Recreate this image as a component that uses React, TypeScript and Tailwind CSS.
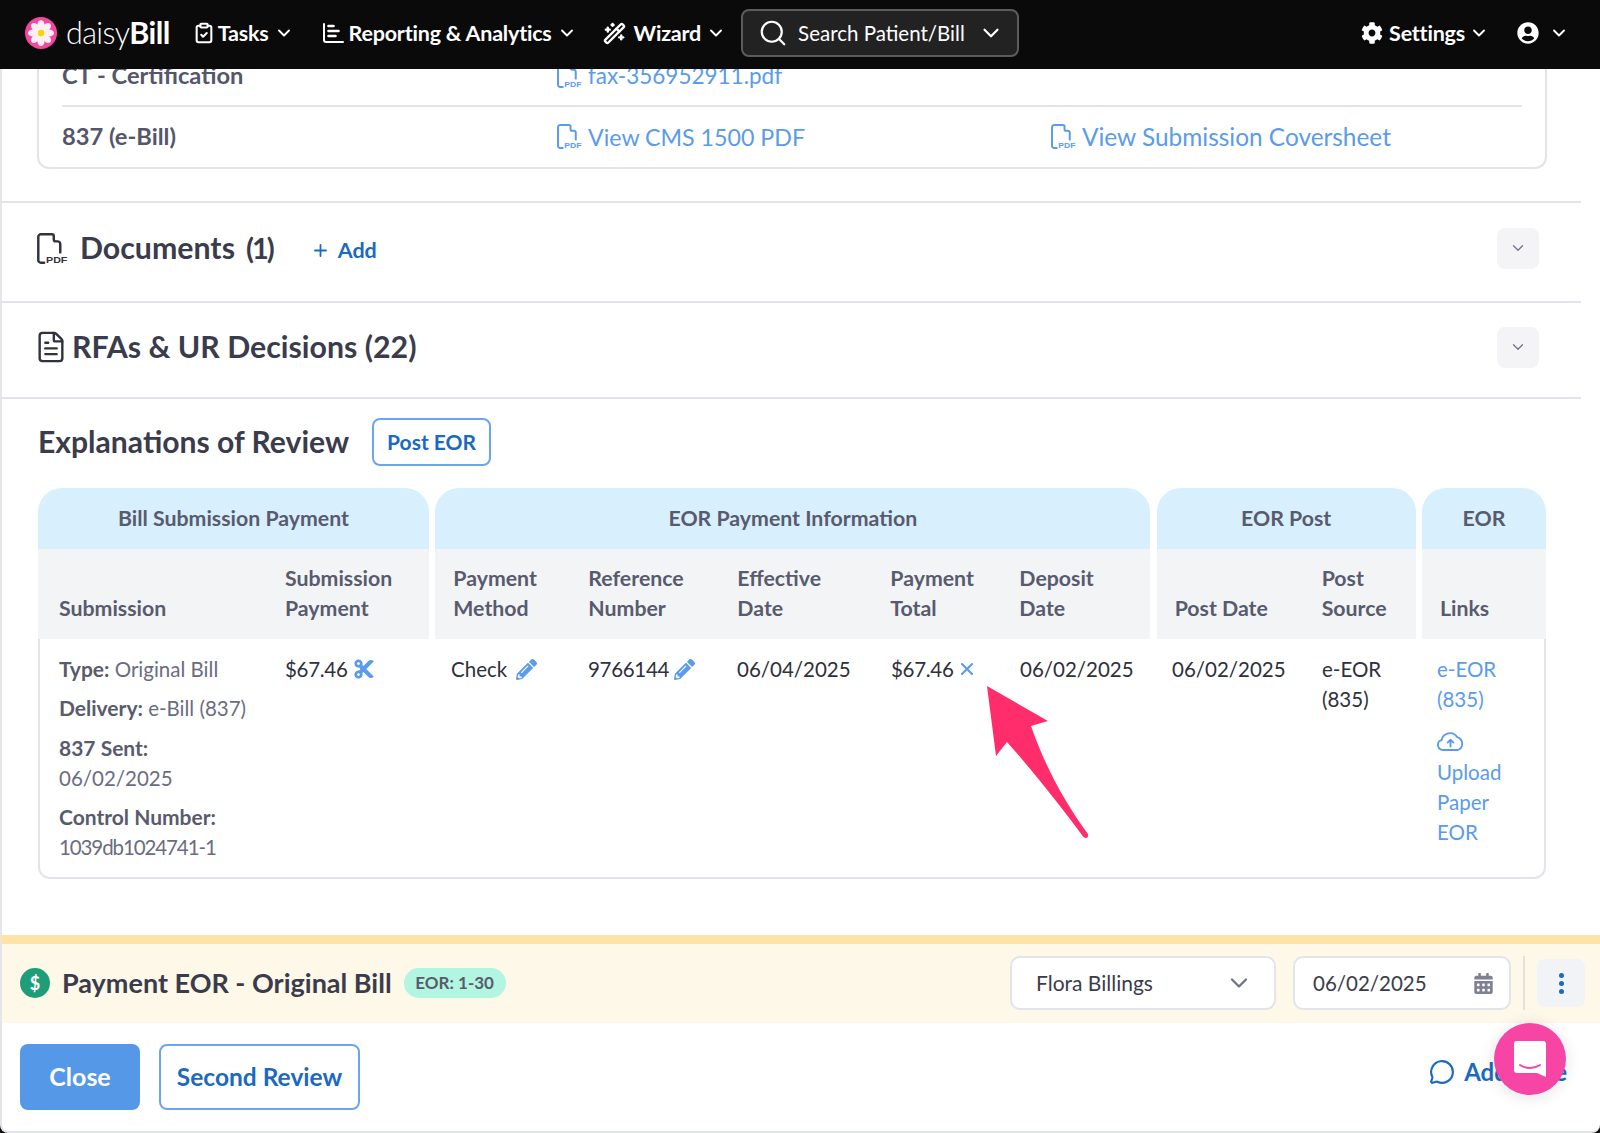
import React from "react";
import { ChevronDown, ClipboardCheck, Search, WandSparkles, FileText, Plus, MessageCircle, X } from "lucide-react";
import { FaCog, FaUserCircle, FaPencilAlt, FaCut, FaCalendarAlt } from "react-icons/fa";

const PdfIcon = ({ className }: { className?: string }) => (
  <svg viewBox="0 0 24 24" className={className} fill="none" stroke="currentColor" strokeWidth="1.9" strokeLinecap="round" strokeLinejoin="round">
    <path d="M5.5 23H3a2 2 0 0 1-2-2V3a2 2 0 0 1 2-2h8.5c1 0 1.5.5 1.5 1.5V5c0 1 .5 1.5 1.5 1.5H16c1 0 2 1 2 2V15" />
    <text x="7" y="23.4" fontSize="7.6" fontWeight="700" stroke="none" fill="currentColor" fontFamily="Liberation Sans, sans-serif" textLength="16.5" lengthAdjust="spacingAndGlyphs">PDF</text>
  </svg>
);

const CloudUp = ({ className }: { className?: string }) => (
  <svg viewBox="0 0 27 19" className={className} fill="none" stroke="currentColor" strokeWidth="1.9" strokeLinecap="round" strokeLinejoin="round">
    <path d="M6.5 18H6a5 5 0 0 1-1.4-9.8 8.5 8.5 0 0 1 15.6-3A6.8 6.8 0 0 1 21 18Z" />
    <path d="M13.5 14.5V8M10.6 10.6l2.9-2.9 2.9 2.9" />
  </svg>
);

const Logo = () => (
  <svg viewBox="0 0 32 32" className="h-8 w-8">
    <circle cx="16" cy="16" r="16" fill="#f5479f" />
    {[0, 45, 90, 135, 180, 225, 270, 315].map((a) => (
      <ellipse key={a} cx="16" cy="8.5" rx="3.6" ry="5.6" fill="#ffeef6" transform={`rotate(${a} 16 16)`} />
    ))}
    <circle cx="16" cy="16" r="3.2" fill="#fbd400" />
  </svg>
);

const ReportIcon = () => (
  <svg viewBox="0 0 22 22" className="h-[22px] w-[22px]" fill="none" stroke="white" strokeWidth="2" strokeLinecap="round">
    <path d="M2 2v16a2 2 0 0 0 2 2h17" />
    <path d="M6.5 4h5M6.5 9h10M6.5 14h7" strokeWidth="2.6" />
  </svg>
);

const NavItem = ({ icon, label, ml, gap }: { icon: React.ReactNode; label: string; ml: string; gap: string }) => (
  <div className={`flex items-center ${ml}`}>
    {icon}
    <span className={`text-[21.5px] font-bold tracking-[-0.2px] text-white ${gap}`}>{label}</span>
    <ChevronDown className="ml-[5px] h-[20px] w-[20px] text-white" strokeWidth={2.25} />
  </div>
);

const Pdf = ({ label, size }: { label: string; size: string }) => (
  <div className="flex items-center font-normal text-[#5a9bea]">
    <PdfIcon className="h-[25px] w-[25px]" />
    <span className={`ml-[6px] ${size}`}>{label}</span>
  </div>
);

const Collapse = () => (
  <div className="flex h-[41px] w-[42px] items-center justify-center rounded-lg bg-[#f4f4f7]">
    <ChevronDown className="h-[18px] w-[18px] text-[#70738a]" strokeWidth={1.75} />
  </div>
);

const Head = ({ w, children }: { w: string; children: React.ReactNode }) => (
  <div className={`flex flex-col justify-end ${w}`}>{children}</div>
);

const Blue = "text-[#5a9bea]";

export default function App() {
  return (
    <div className="relative flex h-[1133px] w-[1600px] flex-col overflow-hidden bg-[#111] font-['Lato','Liberation_Sans',sans-serif]">
      <header className="flex h-[69px] shrink-0 items-center bg-[#0a0a0a] pb-[3px]">
        <div className="ml-[25px]"><Logo /></div>
        <span className="ml-[9px] text-[30.5px] font-light tracking-[-0.6px] text-white">
          daisy<span className="font-bold">Bill</span>
        </span>
        <NavItem ml="ml-[23px]" gap="ml-[3px]" icon={<ClipboardCheck className="h-[22px] w-[22px] text-white" strokeWidth={2.25} />} label="Tasks" />
        <NavItem ml="ml-[28px]" gap="ml-[5px]" icon={<ReportIcon />} label="Reporting & Analytics" />
        <NavItem ml="ml-[26px]" gap="ml-[8px]" icon={<WandSparkles className="h-[23px] w-[23px] text-white" strokeWidth={2.5} />} label="Wizard" />
        <div className="ml-[15px] flex h-[48px] w-[278px] items-center rounded-lg border-2 border-[#5c5c5c] bg-[#222] pl-[15px]">
          <Search className="h-[30px] w-[30px] text-white" strokeWidth={1.75} />
          <span className="ml-[10px] text-[20.5px] text-white">Search Patient/Bill</span>
          <ChevronDown className="ml-[13px] h-[26px] w-[26px] text-white" strokeWidth={2} />
        </div>
        <div className="ml-auto flex items-center">
          <FaCog className="h-[22px] w-[22px] text-white" />
          <span className="ml-[6px] text-[21.5px] font-bold tracking-[-0.2px] text-white">Settings</span>
          <ChevronDown className="ml-[4px] h-[20px] w-[20px] text-white" strokeWidth={2.25} />
          <FaUserCircle className="ml-[28px] h-[22px] w-[22px] text-white" />
          <ChevronDown className="ml-[10px] mr-[31px] h-[20px] w-[20px] text-white" strokeWidth={2.25} />
        </div>
      </header>

      <main className="relative min-h-0 flex-1 overflow-hidden border-l-2 border-[#e6e6ea] bg-white">
        <div className="-mt-[23px] w-[1579px]">
          <div className="mb-[32px] ml-[35px] mr-[34px] rounded-b-xl border-x-2 border-b-2 border-[#e3e4e9] px-[23px]">
            <div className="grid h-[61px] grid-cols-[495px_494px_1fr] items-center border-b-2 border-[#e3e4e9] text-[23.7px] font-bold text-[#54566a]">
              <span>CT - Certification</span>
              <Pdf label="fax-356952911.pdf" size="text-[22.5px]" />
            </div>
            <div className="grid h-[60px] grid-cols-[495px_494px_1fr] items-center text-[23.7px] font-bold text-[#54566a]">
              <span>837 (e-Bill)</span>
              <Pdf label="View CMS 1500 PDF" size="text-[23.2px]" />
              <Pdf label="View Submission Coversheet" size="text-[24.4px]" />
            </div>
          </div>

          <section className="flex h-[100px] items-center border-t-2 border-[#e3e4e9] pb-[8px] pl-[35px] pr-[42px]">
            <PdfIcon className="h-[31px] w-[31px] text-[#303240]" />
            <h2 className="ml-[12px] text-[30.3px] font-bold text-[#3a3c4b]">Documents</h2>
            <span className="ml-[11px] text-[29px] font-bold tracking-[-2px] text-[#3a3c4b]">(1)</span>
            <div className="ml-[38px] mt-[4px] flex items-center text-[21.5px] font-bold text-[#1b6ac0]">
              <Plus className="h-[19px] w-[19px]" strokeWidth={2.25} />
              <span className="ml-[8px]">Add</span>
            </div>
            <div className="ml-auto"><Collapse /></div>
          </section>

          <section className="flex h-[96px] items-center border-t-2 border-[#e3e4e9] pb-[6px] pl-[35px] pr-[42px]">
            <FileText className="-ml-[3px] h-[34px] w-[34px] text-[#303240]" strokeWidth={1.7} />
            <h2 className="ml-[4px] text-[30.3px] font-bold text-[#3a3c4b]">RFAs &amp; UR Decisions (22)</h2>
            <div className="ml-auto"><Collapse /></div>
          </section>

          <section className="border-t-2 border-[#e3e4e9] pl-[36px] pr-[33px] pt-[19px]">
            <div className="flex items-center">
              <h2 className="text-[30.1px] font-bold text-[#3a3c4b]">Explanations of Review</h2>
              <button className="ml-[23px] h-[48px] w-[119px] rounded-lg border-2 border-[#6aa5ee] text-[21px] font-bold text-[#1b6ac0]">Post EOR</button>
            </div>

            <div className="mt-[22px] w-[1508px]">
              <div className="flex justify-between text-[21.3px] font-bold leading-[30px] text-[#585b6e]">
                <div className="w-[391px]">
                  <div className="flex h-[61px] items-center justify-center rounded-t-[24px] bg-[#d8effe] pb-[2px]">Bill Submission Payment</div>
                  <div className="flex h-[90px] bg-[#f3f4f6] pb-[16px] pl-[21px]">
                    <Head w="w-[226px]">Submission</Head>
                    <Head w="w-[140px]"><span>Submission</span><span>Payment</span></Head>
                  </div>
                </div>
                <div className="w-[715px]">
                  <div className="flex h-[61px] items-center justify-center rounded-t-[24px] bg-[#d8effe] pb-[2px]">EOR Payment Information</div>
                  <div className="flex h-[90px] bg-[#f3f4f6] pb-[16px] pl-[18px]">
                    <Head w="w-[135px]"><span>Payment</span><span>Method</span></Head>
                    <Head w="w-[149px]"><span>Reference</span><span>Number</span></Head>
                    <Head w="w-[153px]"><span>Effective</span><span>Date</span></Head>
                    <Head w="w-[129px]"><span>Payment</span><span>Total</span></Head>
                    <Head w="w-[110px]"><span>Deposit</span><span>Date</span></Head>
                  </div>
                </div>
                <div className="w-[259px]">
                  <div className="flex h-[61px] items-center justify-center rounded-t-[24px] bg-[#d8effe] pb-[2px]">EOR Post</div>
                  <div className="flex h-[90px] bg-[#f3f4f6] pb-[16px] pl-[18px]">
                    <Head w="w-[147px]">Post Date</Head>
                    <Head w="w-[90px]"><span>Post</span><span>Source</span></Head>
                  </div>
                </div>
                <div className="w-[124px]">
                  <div className="flex h-[61px] items-center justify-center rounded-t-[24px] bg-[#d8effe] pb-[2px]">EOR</div>
                  <div className="flex h-[90px] bg-[#f3f4f6] pb-[16px] pl-[18px]">
                    <Head w="w-[90px]">Links</Head>
                  </div>
                </div>
              </div>

              <div className="grid h-[240px] grid-cols-[245px_166px_137px_149px_154px_129px_152px_150px_115px_107px] rounded-b-xl border-x-2 border-b-2 border-[#e3e4e9] pt-[15px] text-[20.5px] leading-[30px] text-[#2e303c]">
                <div className="pl-[19px] text-[#6a6d80]">
                  <p><b className="text-[21px] font-bold text-[#585b6e]">Type:</b> Original Bill</p>
                  <p className="mt-[9px]"><b className="text-[21px] font-bold text-[#585b6e]">Delivery:</b> e-Bill (837)</p>
                  <p className="mt-[10px]"><b className="text-[21px] font-bold text-[#585b6e]">837 Sent:</b><br />06/02/2025</p>
                  <p className="mt-[9px]"><b className="text-[21px] font-bold text-[#585b6e]">Control Number:</b><br /><span className="tracking-[-1.1px]">1039db1024741-1</span></p>
                </div>
                <div className="flex h-[30px] items-center"><span className="tracking-[-0.3px]">$67.46</span><FaCut className={`ml-[5px] h-[22px] w-[22px] ${Blue}`} /></div>
                <div className="flex h-[30px] items-center">Check<FaPencilAlt className={`ml-[9px] h-[21px] w-[21px] ${Blue}`} /></div>
                <div className="flex h-[30px] items-center"><span className="tracking-[-0.3px]">9766144</span><FaPencilAlt className={`ml-[5px] h-[21px] w-[21px] ${Blue}`} /></div>
                <div>06/04/2025</div>
                <div className="flex h-[30px] items-center"><span className="tracking-[-0.3px]">$67.46</span><X className={`ml-[3px] h-[20px] w-[20px] ${Blue}`} strokeWidth={2.5} /></div>
                <div>06/02/2025</div>
                <div>06/02/2025</div>
                <div>e-EOR<br />(835)</div>
                <div className={Blue}>
                  <div>e-EOR<br />(835)</div>
                  <CloudUp className="mt-[18px] h-[19px] w-[27px]" />
                  <div className="mt-[6px]">Upload<br />Paper<br />EOR</div>
                </div>
              </div>
            </div>
          </section>
        </div>

        <svg className="absolute left-[979px] top-[611px] h-[160px] w-[112px]" viewBox="980 681 112 160" fill="#ff2d6b">
          <path d="M986 687L1047 722L1030 727C1045 770 1065 805 1087 835C1088 840 1083 840 1081 836C1058 805 1030 770 1006 743L995 757Z" />
        </svg>
      </main>

      <div className="flex h-[88px] shrink-0 items-center border-l-2 border-t-[9px] border-[#fde3a7] border-l-[#e6e6ea] bg-[#fef8e9] pb-[1px] pl-[18px]">
        <span className="flex h-[30px] w-[30px] items-center justify-center rounded-full bg-[#1e9e78] text-[18px] font-bold text-white">$</span>
        <span className="ml-[12px] text-[27px] font-bold text-[#3a3c4b]">Payment EOR - Original Bill</span>
        <span className="ml-[12px] flex h-[30px] w-[102px] items-center justify-center rounded-full bg-[#b2f5e0] text-[17px] font-bold text-[#585b6e]">EOR: 1-30</span>
        <div className="ml-auto flex h-[54px] w-[266px] items-center rounded-[10px] border-2 border-[#e3e4e9] bg-white pl-[24px] pr-[21px] text-[21px] text-[#3a3c4b]">
          Flora Billings
          <ChevronDown className="ml-auto h-[28px] w-[28px] text-[#70738a]" strokeWidth={2} />
        </div>
        <div className="ml-[17px] flex h-[54px] w-[218px] items-center rounded-[10px] border-2 border-[#e3e4e9] bg-white pl-[18px] pr-[16px] text-[20.5px] text-[#3a3c4b]">
          06/02/2025
          <FaCalendarAlt className="ml-auto h-[21px] w-[19px] text-[#7e8095]" />
        </div>
        <div className="ml-[12px] h-[54px] w-[2px] bg-[#e3e1d8]" />
        <div className="ml-[12px] mr-[15px] flex h-[48px] w-[48px] flex-col items-center justify-center gap-[3px] rounded-lg bg-[#f2f3f6]">
          <span className="h-[5px] w-[5px] rounded-full bg-[#1b6ac0]" />
          <span className="h-[5px] w-[5px] rounded-full bg-[#1b6ac0]" />
          <span className="h-[5px] w-[5px] rounded-full bg-[#1b6ac0]" />
        </div>
      </div>

      <footer className="flex h-[110px] shrink-0 items-center rounded-b-lg border-b-2 border-l-2 border-[#e3e4e9] bg-white pl-[18px]">
        <button className="h-[66px] w-[120px] rounded-lg bg-[#5698e8] text-[25px] font-bold text-white">Close</button>
        <button className="ml-[19px] h-[66px] w-[201px] rounded-lg border-2 border-[#6aa5ee] text-[24.5px] font-bold text-[#1b6ac0]">Second Review</button>
        <div className="mb-[10px] ml-auto mr-[33px] flex items-center text-[24px] font-bold text-[#1b6ac0]">
          <MessageCircle className="h-[26px] w-[26px]" strokeWidth={2} />
          <span className="ml-[9px]">Add Note</span>
        </div>
      </footer>

      <div className="absolute left-[1494px] top-[1023px] flex h-[72px] w-[72px] items-center justify-center rounded-full bg-[#f745a6] shadow-[0_2px_16px_rgba(0,0,0,0.12)]">
        <svg viewBox="0 0 32 36" className="h-[36px] w-[32px]">
          <path d="M3 0H29a3 3 0 0 1 3 3V36L23 32H3a3 3 0 0 1-3-3V3a3 3 0 0 1 3-3Z" fill="white" />
          <path d="M6 24C12 28 20 28 26 24" stroke="#f745a6" strokeWidth="2" fill="none" strokeLinecap="round" />
        </svg>
      </div>
    </div>
  );
}
